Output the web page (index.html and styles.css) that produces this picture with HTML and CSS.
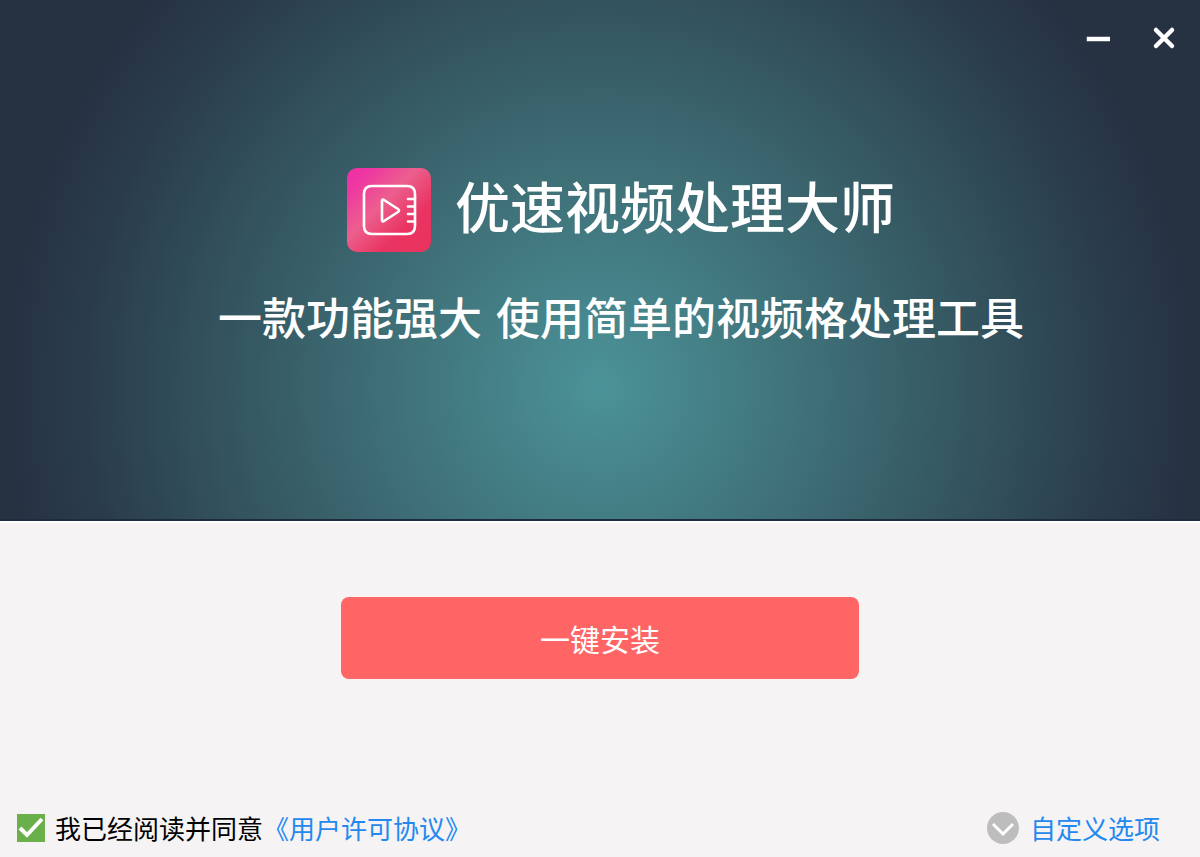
FILE: index.html
```
<!DOCTYPE html>
<html lang="zh-CN">
<head>
	<meta charset="UTF-8">
	<meta name="viewport" content="width=device-width, initial-scale=1">
	<title>优速视频处理大师</title>
	<link rel="stylesheet" href="styles.css">
</head>
<body>
	<header class="hero">
		<nav class="controls">
			<button type="button" aria-label="最小化">
				<svg width="24" height="24" viewBox="0 0 24 24"><path d="M3 13H22" stroke="#fff" stroke-width="4.500" stroke-linecap="square"/></svg>
			</button>
			<button type="button" aria-label="关闭">
				<svg width="24" height="24" viewBox="0 0 24 24"><path d="M4 4L20 20M20 4L4 20" stroke="#fff" stroke-width="4.500" stroke-linecap="round"/></svg>
			</button>
		</nav>
		<div class="brand">
			<svg class="logo" width="84" height="84" viewBox="0 0 84 84">
				<defs>
					<linearGradient id="pink" x1="0" y1="0" x2="1" y2="1">
						<stop offset="0" stop-color="#ee2fa8"/>
						<stop offset="0.14" stop-color="#ee36a2"/>
						<stop offset="0.42" stop-color="#ec5f8d"/>
						<stop offset="0.7" stop-color="#e93462"/>
						<stop offset="1" stop-color="#e9345f"/>
					</linearGradient>
				</defs>
				<rect width="84" height="84" rx="10" fill="url(#pink)"/>
				<g fill="none" stroke="#fff" stroke-width="2.6" stroke-linecap="round" stroke-linejoin="round">
					<path d="M68 30V26Q68 18 60 18H25Q17 18 17 26V58Q17 66 25 66H60Q68 66 68 58V54"/>
					<path d="M68 30V54M61 31H68M61 38.500H68M61 46H68M61 53.500H68"/>
					<path d="M35 33V52Q35 54 37 53L51 44Q53 42.500 51 41L37 32Q35 31 35 33Z"/>
				</g>
			</svg>
			<h1>优速视频处理大师</h1>
		</div>
		<p class="slogan">
			<span>一款功能强大</span>
			<span>使用简单的视频格处理工具</span>
		</p>
	</header>
	<main class="content">
		<button type="button" class="install">一键安装</button>
	</main>
	<footer class="bottom">
		<div class="agree">
			<input type="checkbox" id="agree" checked>
			<label for="agree">我已经阅读并同意</label>
			<a href="#license">《用户许可协议》</a>
		</div>
		<a class="options" href="#options">
			<svg width="34" height="34" viewBox="0 0 34 34">
				<circle cx="17" cy="17" r="16" fill="#bdbdbd"/>
				<path d="M7 13L17 23L27 13" fill="none" stroke="#fff" stroke-width="3"/>
			</svg>
			自定义选项
		</a>
	</footer>
</body>
</html>
```

FILE: styles.css
```
* {
	box-sizing: border-box;
}
body {
	background-color: #f5f3f4;
	display: flex;
	flex-direction: column;
	font-family: "Noto Sans CJK SC", sans-serif;
	margin: 0;
	min-height: 100vh;
}
button {
	border: none;
	cursor: pointer;
	font-family: inherit;
}
a {
	color: #2389ef;
	text-decoration: none;
}

/* header */
.hero {
	background: radial-gradient(circle 600px at 50% 386px, #4b9398, #3f7078 35%, #33535e 64%, #2a3c4c 86%, #263142);
	border-bottom: 2px solid #1d2c3e;
	color: #fff;
	padding-bottom: 173px;
}
.controls {
	display: flex;
	gap: 26px;
	justify-content: flex-end;
	padding: 18px 16px;
}
.controls button {
	background: none;
	height: 40px;
	padding: 8px;
	width: 40px;
}
.controls svg {
	display: block;
}
.brand {
	align-items: flex-start;
	display: flex;
	gap: 24px;
	justify-content: center;
	padding: 92px 0 0 42px;
}
.brand h1 {
	font-size: 55px;
	font-weight: 500;
	line-height: 72px;
	margin: 0;
}
.slogan {
	display: flex;
	font-size: 44px;
	font-weight: 500;
	gap: 14px;
	justify-content: center;
	line-height: 60px;
	margin: 34px 0 0;
	padding-left: 42px;
}

/* install */
.content {
	border-top: 2px solid #fff;
	display: flex;
	flex: 1;
	justify-content: center;
	padding-top: 74px;
}
.install {
	align-self: flex-start;
	background-color: #ff6565;
	border-radius: 8px;
	color: #fff;
	font-size: 30px;
	height: 82px;
	width: 518px;
}

/* footer */
.bottom {
	align-items: center;
	display: flex;
	font-size: 26px;
	justify-content: space-between;
	line-height: 38px;
	padding: 0 40px 10px 17px;
}
.agree {
	align-items: center;
	display: flex;
}
.agree input {
	appearance: none;
	background: #6ab04a url('data:image/svg+xml,<svg xmlns="http://www.w3.org/2000/svg" viewBox="0 0 28 28"><path d="M3 14L10 21L25 5" fill="none" stroke="white" stroke-width="4"/></svg>');
	height: 28px;
	margin: 0 10px 0 0;
	width: 28px;
}
.options {
	align-items: center;
	display: flex;
	gap: 10px;
}
```
